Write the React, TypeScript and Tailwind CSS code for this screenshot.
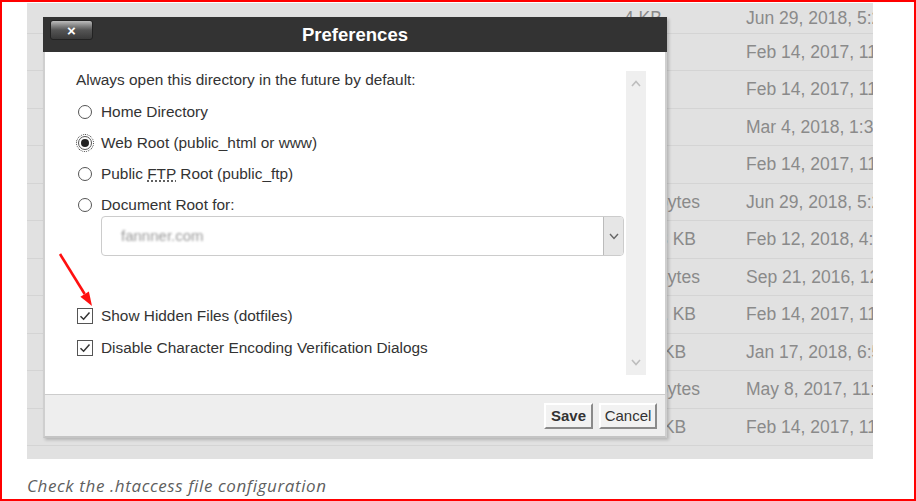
const rows = [
  { size: "4 KB", date: "Jun 29, 2018, 5:24 PM", h: "h-[30.5px]" },
  { size: "4 KB", date: "Feb 14, 2017, 11:02 AM", h: "h-[37.5px]" },
  { size: "4 KB", date: "Feb 14, 2017, 11:02 AM", h: "h-[37.5px]" },
  { size: "4 KB", date: "Mar 4, 2018, 1:35 PM", h: "h-[37.5px]" },
  { size: "4 KB", date: "Feb 14, 2017, 11:02 AM", h: "h-[37.5px]" },
  { size: "393 bytes", date: "Jun 29, 2018, 5:24 PM", h: "h-[37.5px]" },
  { size: "12.43 KB", date: "Feb 12, 2018, 4:10 PM", h: "h-[37.5px]" },
  { size: "393 bytes", date: "Sep 21, 2016, 12:48 PM", h: "h-[37.5px]" },
  { size: "18.21 KB", date: "Feb 14, 2017, 11:02 AM", h: "h-[37.5px]" },
  { size: "1.43 KB", date: "Jan 17, 2018, 6:51 PM", h: "h-[37.5px]" },
  { size: "255 bytes", date: "May 8, 2017, 11:19 AM", h: "h-[37.5px]" },
  { size: "3.57 KB", date: "Feb 14, 2017, 11:02 AM", h: "h-[37.5px]" },
];

function Radio({ checked }: { checked?: boolean }) {
  return (
    <span className="flex h-[14px] w-[14px] shrink-0 items-center justify-center rounded-full border border-[#555] bg-white">
      {checked && <span className="h-[8px] w-[8px] rounded-full bg-[#222]" />}
    </span>
  );
}

function Check() {
  return (
    <span className="flex h-[16px] w-[16px] shrink-0 items-center justify-center border border-[#555] bg-white">
      <svg width="12" height="12" viewBox="0 0 12 12">
        <path d="M1.5 6.2 L4.6 9.2 L10.5 2.4" fill="none" stroke="#333" strokeWidth="1.5" />
      </svg>
    </span>
  );
}

function Chevron({ up }: { up?: boolean }) {
  return (
    <svg width="10" height="7" viewBox="0 0 10 7">
      <path d={up ? "M1 6 L5 1.5 L9 6" : "M1 1 L5 5.5 L9 1"} fill="none" stroke="#bdbdbd" strokeWidth="1.6" />
    </svg>
  );
}

export default function App() {
  return (
    <div className="relative box-border h-[501px] w-[916px] overflow-hidden border-2 border-[#ff0000] bg-white font-['Liberation_Sans',Arial,sans-serif]">
      <div className="relative ml-[25px] mt-[1px] h-[456px] w-[846px] overflow-hidden bg-[#e1e1e1]">
        {rows.map((r, i) => (
          <div key={i} className={`grid grid-cols-[597px_122px_1fr] items-center border-b border-[#d4d4d4] text-[17.5px] text-[#8a8a8a] ${r.h}`}>
            <div />
            <div className="whitespace-nowrap">{r.size}</div>
            <div className="whitespace-nowrap">{r.date}</div>
          </div>
        ))}

        <div className="absolute left-[16px] top-[14px] flex h-[421px] w-[624px] flex-col shadow-[2px_2px_3px_rgba(0,0,0,0.2)]">
          <div className="relative flex h-[35px] shrink-0 items-center justify-center bg-[#333333]">
            <div className="absolute left-[7px] top-[3px] flex h-[20px] w-[43px] items-center justify-center rounded-[3px] border border-[#222] bg-gradient-to-b from-[#bdbdbd] via-[#555] to-[#3a3a3a] text-[15px] font-bold leading-none text-white">
              ×
            </div>
            <span className="text-[18.5px] font-bold text-white">Preferences</span>
          </div>

          <div className="flex h-[342px] shrink-0 border-x-2 border-[#cfcfcf] bg-white pl-[31px] pr-[19px] text-[15.4px] text-[#333]">
            <div className="flex flex-1 flex-col pt-[18px]">
              <div className="flex h-[20px] items-center">Always open this directory in the future by default:</div>
              <div className="mt-[6px] flex h-[31px] items-center gap-[9px] pl-[2px]">
                <Radio />
                <span>Home Directory</span>
              </div>
              <div className="flex h-[31px] items-center gap-[9px] pl-[2px]">
                <span className="rounded-full outline-1 outline-offset-[1px] outline-dotted outline-[#333]">
                  <Radio checked />
                </span>
                <span>Web Root (public_html or www)</span>
              </div>
              <div className="flex h-[31px] items-center gap-[9px] pl-[2px]">
                <Radio />
                <span>
                  Public <span className="underline decoration-dotted underline-offset-2">FTP</span> Root (public_ftp)
                </span>
              </div>
              <div className="flex h-[31px] items-center gap-[9px] pl-[2px]">
                <Radio />
                <span>Document Root for:</span>
              </div>
              <div className="ml-[25px] mt-[-4px] flex h-[40px] w-[523px] overflow-hidden rounded-[4px] border border-[#cccccc] bg-white">
                <div className="flex flex-1 items-center pl-[19px] text-[15px] text-[#999] blur-[1.2px]">fannner.com</div>
                <div className="flex w-[20px] items-center justify-center border-l border-[#bbbbbb] bg-[#e6e6e6]">
                  <svg width="10" height="7" viewBox="0 0 10 7">
                    <path d="M1 1 L5 5.5 L9 1" fill="none" stroke="#666" strokeWidth="1.4" />
                  </svg>
                </div>
              </div>
              <div className="mt-[44px] flex h-[32px] items-center gap-[8px] pl-[1px]">
                <Check />
                <span>Show Hidden Files (dotfiles)</span>
              </div>
              <div className="flex h-[32px] items-center gap-[8px] pl-[1px]">
                <Check />
                <span>Disable Character Encoding Verification Dialogs</span>
              </div>
            </div>
            <div className="my-[19px] flex w-[20px] flex-col items-center justify-between bg-[#efefef] py-[9px]">
              <Chevron up />
              <Chevron />
            </div>
          </div>

          <div className="flex flex-1 items-center justify-end gap-[6px] border-x-2 border-b-2 border-t border-x-[#cfcfcf] border-b-[#c4c4c4] border-t-[#cccccc] bg-[#eeeeee] pr-[8px] text-[15px] text-[#333]">
            <button className="h-[26px] w-[49px] border-2 border-b-[#8a8a8a] border-l-white border-r-[#8a8a8a] border-t-white bg-[#f2f2f2] font-bold">
              Save
            </button>
            <button className="h-[26px] w-[58px] border-2 border-b-[#8a8a8a] border-l-white border-r-[#8a8a8a] border-t-white bg-[#f2f2f2]">
              Cancel
            </button>
          </div>
        </div>
      </div>

      <div className="ml-[25px] mt-[16px] font-['Open_Sans',sans-serif] text-[17px] leading-[22px] tracking-[0.6px] text-[#5f5f5f] italic">
        Check the .htaccess file configuration
      </div>

      <svg className="absolute left-[48px] top-[243px]" width="50" height="68" viewBox="0 0 50 68">
        <line x1="10" y1="9" x2="34.7" y2="49" stroke="#ff1010" strokeWidth="2.6" />
        <polygon points="42,61 38.9,46.5 30.4,51.7" fill="#ff1010" />
      </svg>
    </div>
  );
}
